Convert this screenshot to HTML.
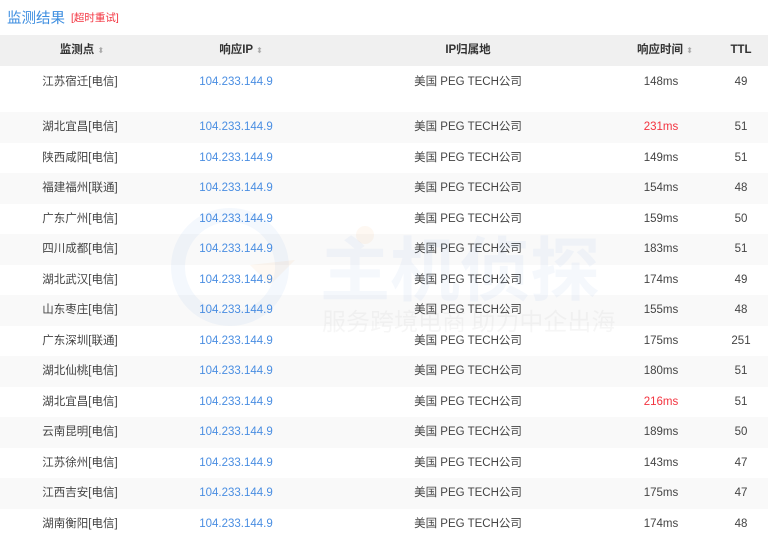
<!DOCTYPE html>
<html><head><meta charset="utf-8"><style>
*{margin:0;padding:0;box-sizing:border-box}
body{width:768px;height:542px;overflow:hidden;background:#fff;font-family:"Liberation Sans","Noto Sans CJK SC",sans-serif;font-size:11.5px;color:#444;position:relative}
.title{position:absolute;left:7px;top:7px;font-size:14.5px;color:#3d8ee0}
.tag{position:absolute;left:71px;top:10px;font-size:10.5px;color:#f3333f}
.row{position:absolute;left:0;width:768px;height:30.5px}
.g{background:#f9f9f9}
.c{position:absolute;top:0;line-height:31px;text-align:center;transform:translateX(-50%);white-space:nowrap}
.hd{background:#f0f0f0;top:35px;height:31px;font-weight:bold;color:#333}
.ip{color:#4a8ee2}
.red{color:#f3333f}
.s{font-size:8px;color:#aaa;font-weight:normal}
.wm{position:absolute;pointer-events:none}
</style></head><body>
<div class="title">监测结果</div>
<div class="tag">[超时重试]</div>
<div class="row hd"><div class="c" style="left:82px">监测点 <span class="s">⬍</span></div><div class="c" style="left:241px">响应IP <span class="s">⬍</span></div><div class="c" style="left:468px">IP归属地</div><div class="c" style="left:665px">响应时间 <span class="s">⬍</span></div><div class="c" style="left:741px">TTL</div></div>
<div class="row" style="top:66px;height:46px"><div class="c" style="left:80px;line-height:32px">江苏宿迁[电信]</div><div class="c ip" style="left:236px;line-height:32px">104.233.144.9</div><div class="c" style="left:468px;line-height:32px">美国 PEG TECH公司</div><div class="c" style="left:661px;line-height:32px">148ms</div><div class="c" style="left:741px;line-height:32px">49</div></div>
<div id="rows"></div>
<svg class="wm" style="left:170px;top:205px" width="460" height="130" viewBox="0 0 460 130">
<g opacity="0.05" fill="none" stroke="#2a6fd0" stroke-width="14"><circle cx="60" cy="62" r="52"/></g>
<path d="M80 60 L125 55 L100 80Z" fill="#f5a040" opacity="0.07"/>
<circle cx="195" cy="30" r="9" fill="#f5a040" opacity="0.07"/>
<text x="150" y="90" font-size="70" font-family="Noto Sans CJK SC" fill="#2a6fd0" opacity="0.045" font-weight="bold">主机侦探</text>
<text x="152" y="125" font-size="24" font-family="Noto Sans CJK SC" fill="#777" opacity="0.06">服务跨境电商 助力中企出海</text>
</svg>
<script>
var d=[["湖北宜昌[电信]","231ms",51,1],["陕西咸阳[电信]","149ms",51],["福建福州[联通]","154ms",48],["广东广州[电信]","159ms",50],["四川成都[电信]","183ms",51],["湖北武汉[电信]","174ms",49],["山东枣庄[电信]","155ms",48],["广东深圳[联通]","175ms",251],["湖北仙桃[电信]","180ms",51],["湖北宜昌[电信]","216ms",51,1],["云南昆明[电信]","189ms",50],["江苏徐州[电信]","143ms",47],["江西吉安[电信]","175ms",47],["湖南衡阳[电信]","174ms",48]];
var h="";d.forEach(function(r,i){h+='<div class="row'+(i%2==0?' g':'')+'" style="top:'+(112+i*30.5)+'px"><div class="c" style="left:80px">'+r[0]+'</div><div class="c ip" style="left:236px">104.233.144.9</div><div class="c" style="left:468px">美国 PEG TECH公司</div><div class="c'+(r[3]?' red':'')+'" style="left:661px">'+r[1]+'</div><div class="c" style="left:741px">'+r[2]+'</div></div>'});
document.getElementById("rows").innerHTML=h;
</script>
</body></html>
